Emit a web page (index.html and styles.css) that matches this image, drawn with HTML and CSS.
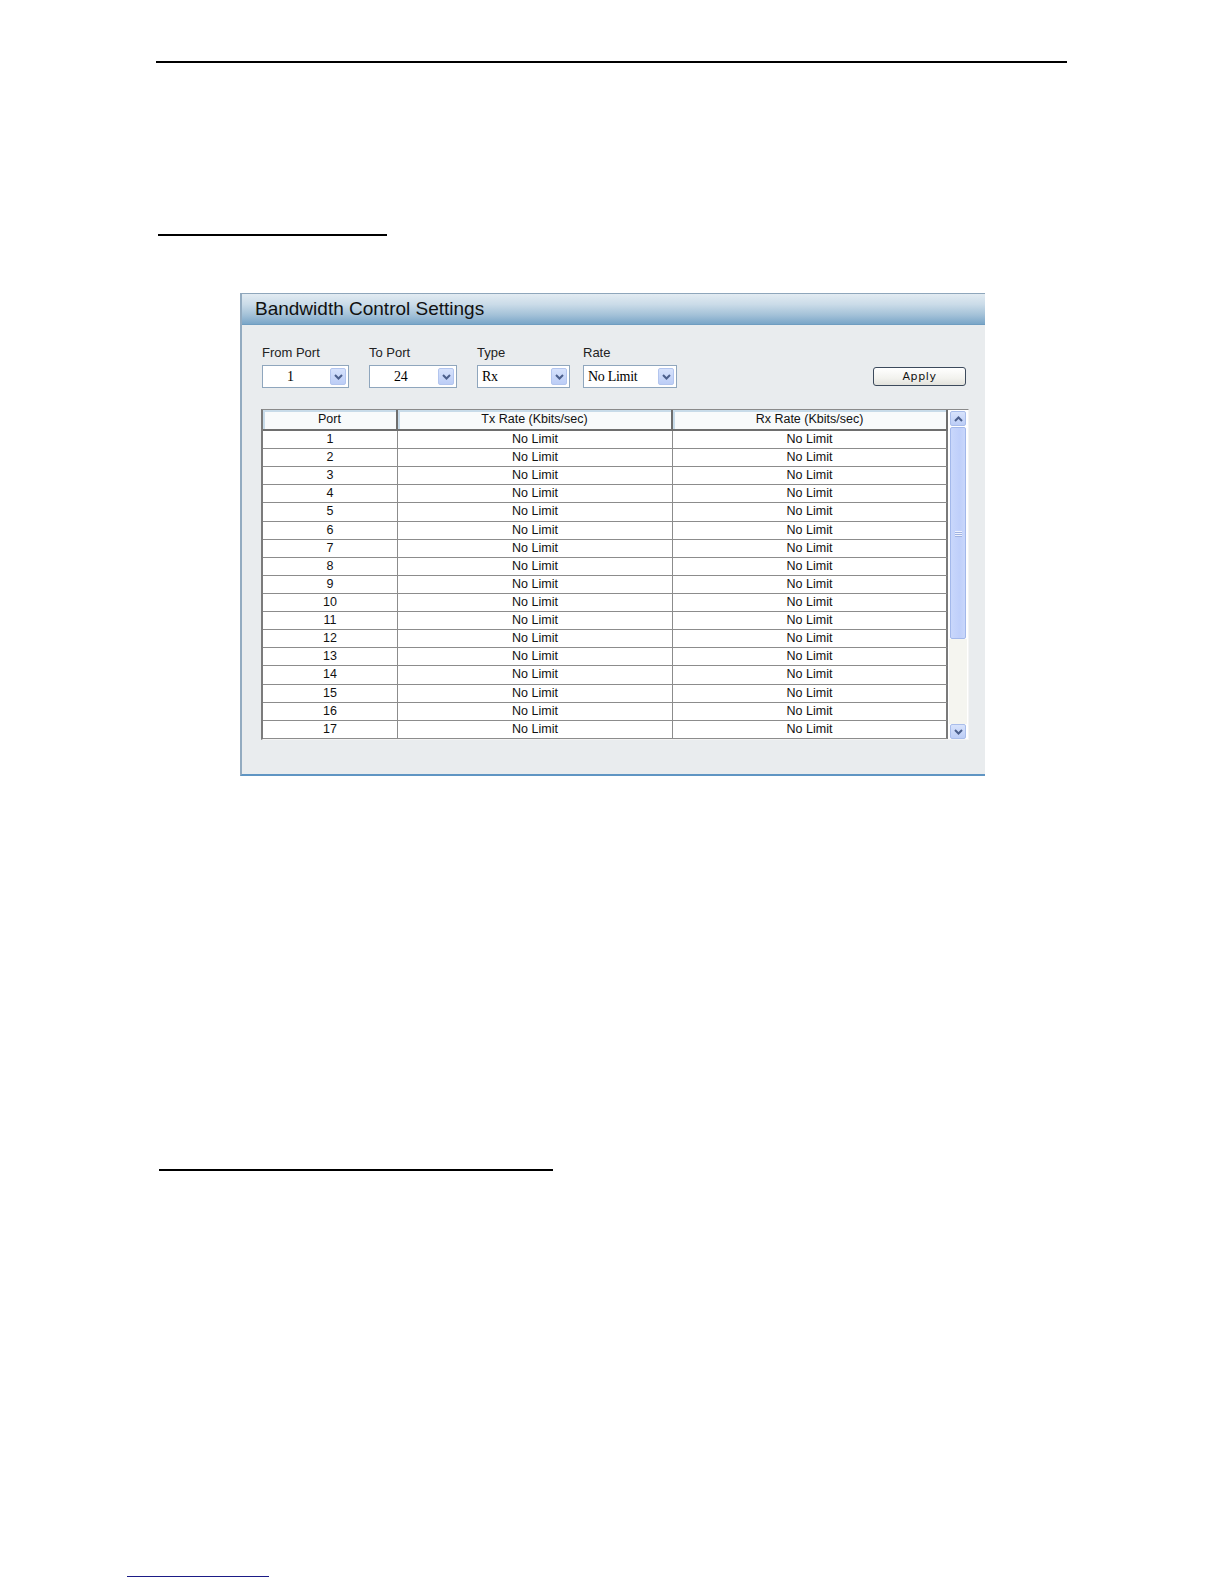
FILE: index.html
```html
<!DOCTYPE html>
<html lang="en">
<head>
<meta charset="utf-8">
<title>Bandwidth Control Settings</title>
<link rel="stylesheet" href="styles.css">
</head>
<body>
<div class="page">
  <div class="rule rule-top"></div>
  <div class="rule rule-sec"></div>

  <section class="panel">
    <h1 class="panel-title">Bandwidth Control Settings</h1>
    <div class="panel-body">
      <div class="form-row">
        <div class="field f-from">
          <label class="lbl">From Port</label>
          <div class="select s-from"><span class="val v-from">1</span><span class="arrow"><svg width="9" height="6" viewBox="0 0 9 6"><path d="M1 1 L4.5 4.5 L8 1" fill="none" stroke="#4b5f8c" stroke-width="2"/></svg></span></div>
        </div>
        <div class="field f-to">
          <label class="lbl">To Port</label>
          <div class="select s-to"><span class="val v-to">24</span><span class="arrow"><svg width="9" height="6" viewBox="0 0 9 6"><path d="M1 1 L4.5 4.5 L8 1" fill="none" stroke="#4b5f8c" stroke-width="2"/></svg></span></div>
        </div>
        <div class="field f-type">
          <label class="lbl">Type</label>
          <div class="select s-type"><span class="val v-left">Rx</span><span class="arrow"><svg width="9" height="6" viewBox="0 0 9 6"><path d="M1 1 L4.5 4.5 L8 1" fill="none" stroke="#4b5f8c" stroke-width="2"/></svg></span></div>
        </div>
        <div class="field f-rate">
          <label class="lbl">Rate</label>
          <div class="select s-rate"><span class="val v-left">No Limit</span><span class="arrow"><svg width="9" height="6" viewBox="0 0 9 6"><path d="M1 1 L4.5 4.5 L8 1" fill="none" stroke="#4b5f8c" stroke-width="2"/></svg></span></div>
        </div>
        <button class="btn" type="button">Apply</button>
      </div>

      <div class="grid-wrap">
        <table class="grid">
          <colgroup>
            <col class="c-port">
            <col class="c-tx">
            <col class="c-rx">
          </colgroup>
          <thead>
            <tr><th>Port</th><th>Tx Rate (Kbits/sec)</th><th>Rx Rate (Kbits/sec)</th></tr>
          </thead>
          <tbody>
            <tr><td>1</td><td>No Limit</td><td>No Limit</td></tr>
            <tr><td>2</td><td>No Limit</td><td>No Limit</td></tr>
            <tr><td>3</td><td>No Limit</td><td>No Limit</td></tr>
            <tr><td>4</td><td>No Limit</td><td>No Limit</td></tr>
            <tr><td>5</td><td>No Limit</td><td>No Limit</td></tr>
            <tr><td>6</td><td>No Limit</td><td>No Limit</td></tr>
            <tr><td>7</td><td>No Limit</td><td>No Limit</td></tr>
            <tr><td>8</td><td>No Limit</td><td>No Limit</td></tr>
            <tr><td>9</td><td>No Limit</td><td>No Limit</td></tr>
            <tr><td>10</td><td>No Limit</td><td>No Limit</td></tr>
            <tr><td>11</td><td>No Limit</td><td>No Limit</td></tr>
            <tr><td>12</td><td>No Limit</td><td>No Limit</td></tr>
            <tr><td>13</td><td>No Limit</td><td>No Limit</td></tr>
            <tr><td>14</td><td>No Limit</td><td>No Limit</td></tr>
            <tr><td>15</td><td>No Limit</td><td>No Limit</td></tr>
            <tr><td>16</td><td>No Limit</td><td>No Limit</td></tr>
            <tr><td>17</td><td>No Limit</td><td>No Limit</td></tr>
          </tbody>
        </table>
        <div class="scrollbar">
          <div class="sb-btn"><svg width="9" height="6" viewBox="0 0 9 6"><path d="M1 5 L4.5 1.5 L8 5" fill="none" stroke="#4b5f8c" stroke-width="2"/></svg></div>
          <div class="sb-thumb"><span class="grip"></span><span class="grip"></span><span class="grip"></span></div>
          <div class="sb-track"></div>
          <div class="sb-btn"><svg width="9" height="6" viewBox="0 0 9 6"><path d="M1 1 L4.5 4.5 L8 1" fill="none" stroke="#4b5f8c" stroke-width="2"/></svg></div>
        </div>
      </div>
    </div>
  </section>

  <div class="rule rule-sub"></div>
  <div class="rule-link"></div>
</div>
</body>
</html>
```

FILE: styles.css
```css
* { box-sizing: border-box; }

html, body {
  margin: 0;
  padding: 0;
  background: #ffffff;
}

body {
  font-family: "Liberation Sans", Arial, sans-serif;
  color: #111;
}

.page {
  width: 1224px;
  height: 1584px;
  padding-top: 61px;
  overflow: hidden;
}

.rule { background: #000; }

.rule-top {
  margin-left: 156px;
  width: 911px;
  height: 2px;
}

.rule-sec {
  margin-top: 171px;
  margin-left: 158px;
  width: 229px;
  height: 2px;
}

/* ---------- Panel ---------- */
.panel {
  margin-top: 57px;
  margin-left: 240px;
  width: 745px;
  background: #e9ecee;
  border-top: 1px solid #8ea6bb;
  border-left: 2px solid #93abc0;
  border-bottom: 2px solid #5f95c3;
}

.panel-title {
  margin: 0;
  height: 31px;
  padding-left: 13px;
  font-size: 19px;
  font-weight: normal;
  line-height: 30px;
  color: #111;
  background: linear-gradient(#e2ebf2 0%, #cadbe8 35%, #a3c1d8 70%, #7aa6c8 100%);
  border-bottom: 1px solid #6f9dc0;
}

.panel-body {
  padding: 19px 19px 34px 19px;
}

/* ---------- Form row ---------- */
.form-row {
  display: flex;
  align-items: flex-end;
  margin-left: 1px;
  height: 44px;
}

.field {
  display: flex;
  flex-direction: column;
}

.f-from { width: 107px; }
.f-to { width: 108px; }
.f-type { width: 106px; }
.f-rate { width: 100px; }

.lbl {
  font-size: 13px;
  line-height: 15px;
  color: #222;
  margin-bottom: 5px;
}

.select {
  display: flex;
  align-items: center;
  height: 23px;
  background: #fff;
  border: 1px solid #8fa6bd;
  padding: 2px;
}

.s-from { width: 87px; }
.s-to { width: 88px; }
.s-type { width: 93px; }
.s-rate { width: 94px; }

.val {
  flex: 1;
  font-family: "Liberation Serif", "Times New Roman", serif;
  font-size: 14px;
  line-height: 17px;
  color: #000;
  letter-spacing: -0.3px;
}

.v-from { padding-left: 22px; }
.v-to { padding-left: 22px; }
.v-left { padding-left: 2px; }

.arrow {
  width: 16px;
  height: 17px;
  display: flex;
  align-items: center;
  justify-content: center;
  background: linear-gradient(#d6e2fc, #bccdf6);
  border: 1px solid #b3c5ee;
  border-radius: 2px;
}

.btn {
  margin-left: auto;
  margin-bottom: 2px;
  width: 93px;
  height: 19px;
  padding: 0;
  font-family: "DejaVu Sans", Tahoma, sans-serif;
  font-size: 11px;
  letter-spacing: 0.6px;
  color: #111;
  background: linear-gradient(#ffffff, #f2f2ee 60%, #e2e2dc);
  border: 1px solid #3c4a5c;
  border-radius: 3px;
}

/* ---------- Grid ---------- */
.grid-wrap {
  display: flex;
  margin-top: 21px;
  width: 708px;
  height: 331px;
  background: #ffffff;
  border-top: 1px solid #8a8a8a;
  border-left: 2px solid #7b7b7b;
  border-right: 1px solid #f4f4f4;
  border-bottom: 1px solid #f4f4f4;
}

.grid {
  width: 685px;
  table-layout: fixed;
  border-collapse: separate;
  border-spacing: 0;
  font-size: 12.5px;
  color: #111;
}

.c-port { width: 135px; }
.c-tx { width: 275px; }
.c-rx { width: 275px; }

.grid th {
  padding: 0;
  font-weight: normal;
  line-height: 19px;
  text-align: center;
  background: #f8fafb;
  border-right: 2px solid #6e6e6e;
  border-bottom: 2px solid #6e6e6e;
  box-shadow: inset 2px 2px 0 #c8dbe9;
}

.grid td {
  padding: 0;
  line-height: 17px;
  text-align: center;
  border-right: 1px solid #8c8c8c;
  border-bottom: 1px solid #8c8c8c;
}

.grid td:last-child { border-right: 2px solid #7a7a7a; }

/* ---------- Scrollbar ---------- */
.scrollbar {
  width: 20px;
  display: flex;
  flex-direction: column;
  align-items: center;
  padding: 1px 0 0 0;
  background: #ffffff;
}

.sb-btn {
  width: 16px;
  height: 15px;
  display: flex;
  align-items: center;
  justify-content: center;
  background: linear-gradient(#d8e3fc, #bccdf6);
  border: 1px solid #a9bdea;
  border-radius: 2px;
}

.sb-thumb {
  width: 16px;
  height: 212px;
  margin-top: 1px;
  display: flex;
  flex-direction: column;
  align-items: center;
  justify-content: center;
  gap: 1px;
  background: linear-gradient(90deg, #c9d7fb, #bfcffa 60%, #c9d7fb);
  border: 1px solid #a3b8ea;
  border-radius: 2px;
}

.grip {
  display: block;
  width: 7px;
  height: 1px;
  background: #eef2fd;
  box-shadow: 0 1px 0 #9fb2e2;
}

.sb-track {
  flex: 1;
  width: 18px;
  background: #f5f5f0;
}

/* ---------- Lower rules ---------- */
.rule-sub {
  margin-top: 393px;
  margin-left: 159px;
  width: 394px;
  height: 2px;
}

.rule-link {
  margin-top: 405px;
  margin-left: 127px;
  width: 142px;
  height: 1px;
  background: #1b1b86;
}
```
